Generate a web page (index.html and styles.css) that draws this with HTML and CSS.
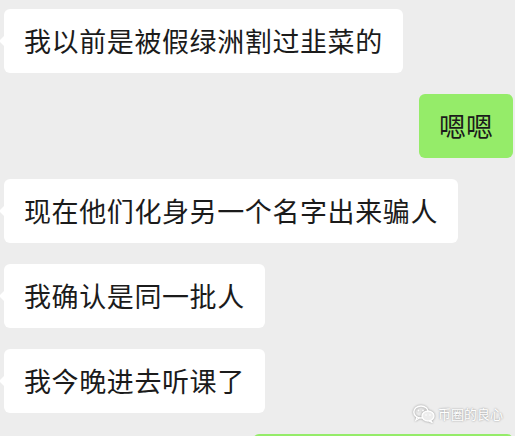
FILE: index.html
```html
<!DOCTYPE html>
<html lang="zh-CN">
<head>
    <meta charset="UTF-8">
    <meta name="viewport" content="width=device-width, initial-scale=1.0">
    <title>聊天记录</title>
    <link rel="stylesheet" href="styles.css">
</head>
<body>

    <div class="chat">
        <div class="row left"><div class="bubble">我以前是被假绿洲割过韭菜的</div></div>
        <div class="row right"><div class="bubble mine">嗯嗯</div></div>
        <div class="row left"><div class="bubble">现在他们化身另一个名字出来骗人</div></div>
        <div class="row left"><div class="bubble">我确认是同一批人</div></div>
        <div class="row left"><div class="bubble">我今晚进去听课了</div></div>
        <div class="row right"><div class="bubble mine last">&nbsp;</div></div>
    </div>

    <!-- watermark -->
    <div class="watermark">
        <svg class="wm-logo" width="22" height="18" viewBox="0 0 22 18">
            <ellipse cx="8" cy="7" rx="7.2" ry="6" fill="none" stroke="#fff" stroke-width="1.4"/>
            <path d="M4 12 L3 15 L6.5 13" fill="none" stroke="#fff" stroke-width="1.3"/>
            <ellipse cx="15" cy="11" rx="6" ry="5" fill="#ededed" stroke="#fff" stroke-width="1.4"/>
            <path d="M18 15.5 L19 17.5 L16 16" fill="none" stroke="#fff" stroke-width="1.2"/>
            <circle cx="5.5" cy="5.5" r="0.9" fill="#fff"/>
            <circle cx="10" cy="5.5" r="0.9" fill="#fff"/>
            <circle cx="13" cy="10" r="0.8" fill="#fff"/>
            <circle cx="17" cy="10" r="0.8" fill="#fff"/>
        </svg>
        <span>币圈的良心</span>
    </div>

</body>
</html>
```

FILE: styles.css
```css
html, body {
    margin: 0;
    padding: 0;
    background-color: #ededed;
    overflow: hidden;
}
body {
    width: 515px;
    height: 436px;
    position: relative;
    font-family: "Noto Sans CJK SC", "Noto Sans", sans-serif;
}
.chat {
    display: flex;
    flex-direction: column;
    gap: 21px;
    padding: 9px 2px 0 4px;
}
.row {
    display: flex;
}
.row.right {
    justify-content: flex-end;
}
.bubble {
    position: relative;
    background-color: #ffffff;
    color: #1b1b1b;
    font-size: 27px;
    letter-spacing: 0.6px;
    line-height: 38px;
    padding: 13px 20px;
    border-radius: 6px;
    white-space: nowrap;
}
.row.left .bubble::before {
    content: "";
    position: absolute;
    left: -5px;
    top: 26px;
    border-top: 6px solid transparent;
    border-bottom: 6px solid transparent;
    border-right: 6px solid #ffffff;
}
.bubble.mine {
    background-color: #95ec69;
    letter-spacing: 0;
    padding: 13px 20px;
}
.bubble.last {
    width: 220px;
}
.watermark {
    position: absolute;
    left: 413px;
    top: 404px;
    display: flex;
    align-items: center;
    gap: 3px;
    color: #ffffff;
    font-size: 13px;
    text-shadow: 0 0 2px rgba(0,0,0,0.45);
}
.wm-logo {
    filter: drop-shadow(0 0 1px rgba(0,0,0,0.4));
}
```
